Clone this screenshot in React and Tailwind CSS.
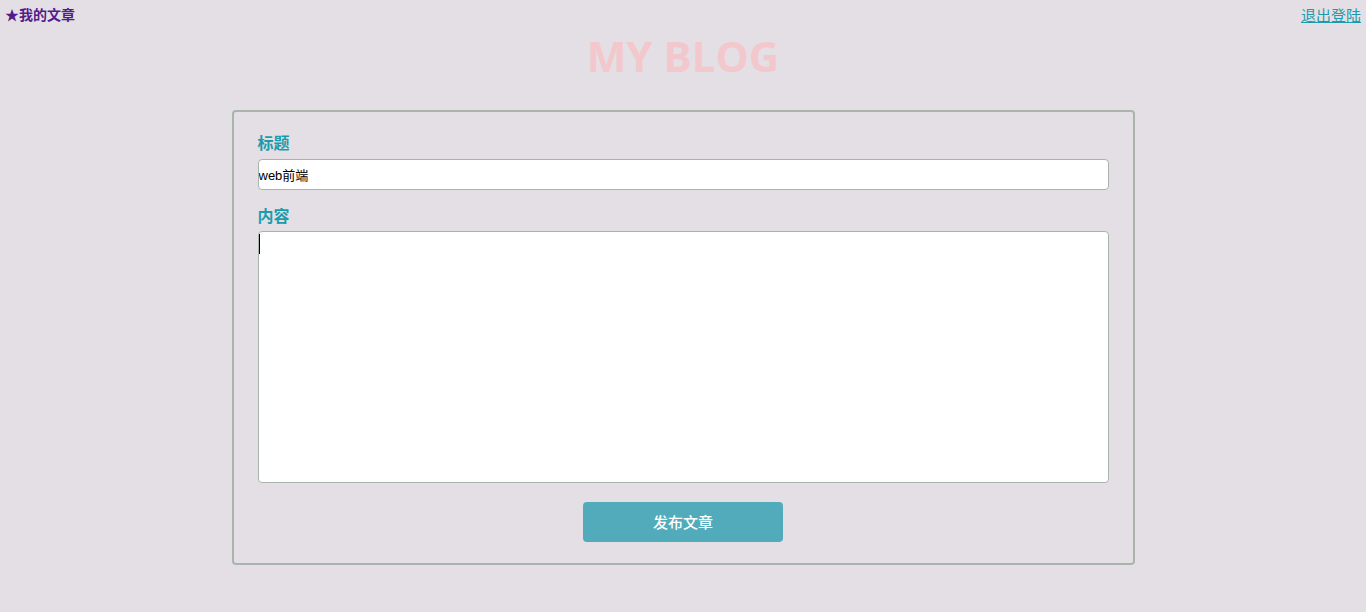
export default function App() {
  return (
    <div className="min-h-[612px] bg-[#e4dfe5] font-['Noto_Sans','Noto_Sans_CJK_SC',sans-serif]">
      <div className="flex items-start justify-between px-[5px] pt-[5px]">
        <a href="#" className="text-[14px] leading-[20px] font-bold text-[#551a8b] no-underline">
          ★我的文章
        </a>
        <a href="#" className="text-[15px] leading-[20px] text-[#1b9cad] underline">
          退出登陆
        </a>
      </div>
      <h1 className="mt-[5px] text-center text-[42px] leading-[52px] font-bold text-[#f3c8cc] font-['Open_Sans',sans-serif]">
        MY BLOG
      </h1>
      <div className="mx-auto mt-[28px] w-[903px] rounded-[4px] border-2 border-[#a9b5ac] px-[24px] pt-[19px] pb-[21px]">
        <label className="block text-[16px] leading-[24px] font-bold text-[#1b9cad]">标题</label>
        <input
          type="text"
          defaultValue="web前端"
          className="mt-[4px] block h-[31px] w-full rounded-[4px] border border-[#a9b5ac] bg-white px-0 text-[13px] text-black font-['Liberation_Sans','Noto_Sans_CJK_SC',sans-serif] outline-none"
        />
        <label className="mt-[14px] block text-[16px] leading-[24px] font-bold text-[#1b9cad]">内容</label>
        <div className="relative mt-[3px]">
          <textarea className="block h-[252px] w-full resize-none rounded-[4px] border border-[#a9b5ac] bg-white p-0 text-[13px] outline-none" />
          <span className="absolute left-[1px] top-[3px] h-[20px] w-[1px] bg-black" />
        </div>
        <div className="mt-[19px] flex justify-center">
          <button className="h-[40px] w-[200px] rounded-[4px] bg-[#52abbb] text-[15px] font-medium text-white">
            发布文章
          </button>
        </div>
      </div>
    </div>
  );
}
